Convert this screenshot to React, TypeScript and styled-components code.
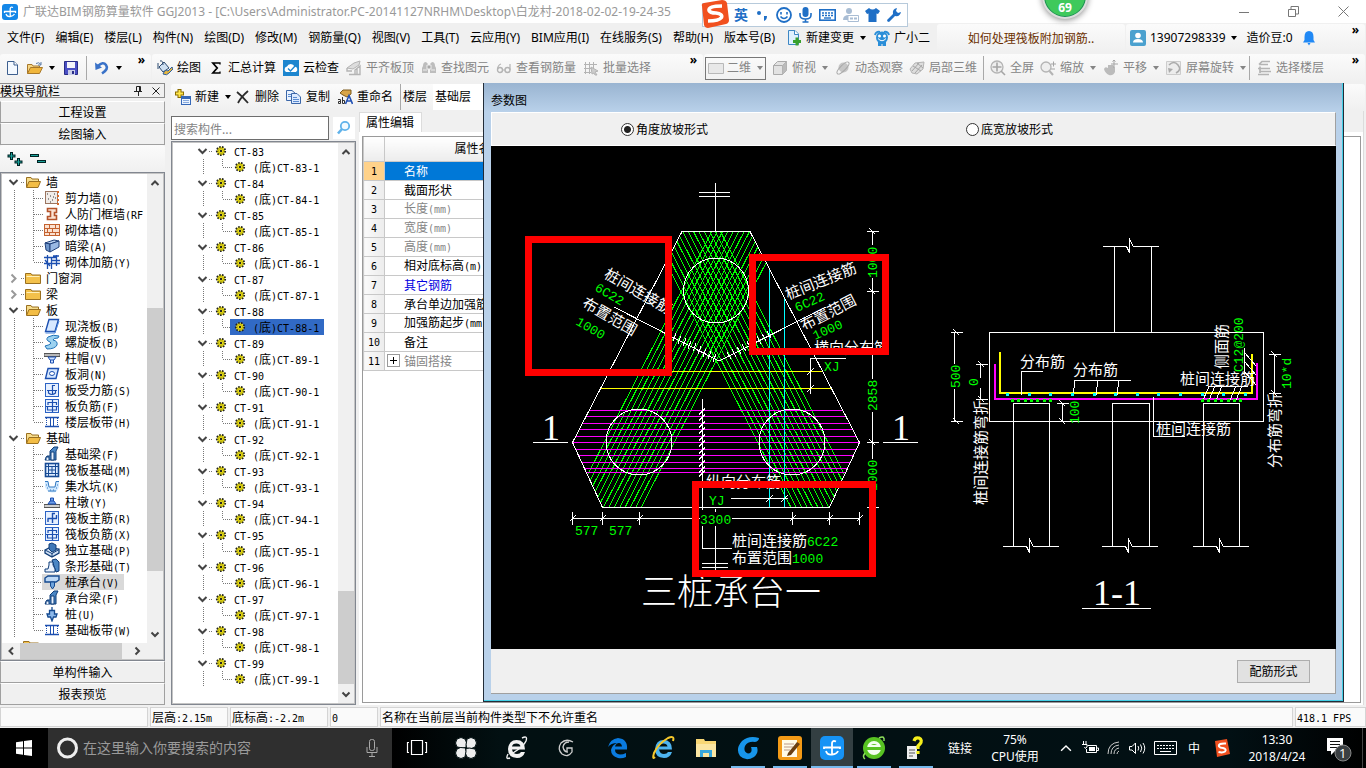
import React from 'react';
import styled, { createGlobalStyle, css } from 'styled-components';

const UI = '"Noto Sans", "Noto Sans CJK SC", sans-serif';
const SONG = '"Noto Sans CJK SC", sans-serif';
const MONO = '"DejaVu Sans Mono", "Noto Sans CJK SC", monospace';

const Global = createGlobalStyle`
  *, *::before, *::after { box-sizing: border-box; }
  body { margin: 0; background: #f0f0f0; font: 12px/16px ${UI}; color: #000; overflow: hidden; }
  button, input, select { font: inherit; color: inherit; margin: 0; }
  ul { list-style: none; margin: 0; padding: 0; }
  svg { display: block; flex: none; }
`;

/* ---------- text ---------- */

const Half = styled.span`
  font-family: ${MONO};
  font-size: 10px;
`;

const SongText = styled.span`
  font-family: ${SONG};
  font-size: 12px;
  white-space: nowrap;
`;

function Song({ children }: { children: string }) {
  return (
    <SongText>
      {children.split(/([\x20-\x7e]+)/).map((part, i) =>
        i % 2 ? <Half key={i}>{part}</Half> : part,
      )}
    </SongText>
  );
}

/* ---------- icons ---------- */

const blue = '#1c4fb0';
const g = '#b4b4b4';

const glyphs: Record<string, React.ReactNode> = {
  app: (<><rect width="16" height="16" rx="3" fill="#1487e8" /><path d="M2.500 9V7.500H13.500V9M8.200 12.500V4.500Q8.500 2.500 11 3.500M4 10Q5 13 8.200 12.500T12.500 10" fill="none" stroke="#fff" strokeWidth="1.300" /></>),
  doc: (<><path d="M3.500 1.500H10L13.500 5V14.500H3.500Z" fill="#f4f9ff" stroke="#3d5f8f" /><path d="M10 1.500V5H13.500" fill="#fff" stroke="#3d5f8f" /></>),
  open: (<><path d="M.5 13.500V4.500H5L6 6H12.500V8" fill="#f6d684" stroke="#a8782a" /><path d="M.5 13.500L3.500 7.500H15.500L12.500 13.500Z" fill="#f0b63c" stroke="#a8782a" /><path d="M9 3.500q3-2 5 1M14 2v3h-3" fill="none" stroke="#5d7da8" /></>),
  save: (<><path d="M1.500 1.500H14.500V14.500H1.500Z" fill="#4a4fc4" stroke="#2a2d86" /><rect x="4" y="2" width="8" height="6" fill="#f4f4fa" /><rect x="5" y="10" width="7" height="5" fill="#c9cde8" /><rect x="9" y="11" width="2" height="3" fill="#2a2d86" /></>),
  undo: (<><path d="M4 6Q9 1 12 5T8 13.500" fill="none" stroke="#3a72c8" strokeWidth="2.600" /><path d="M1 2.500L1.500 10L8 7.500Z" fill="#3a72c8" /></>),
  paint: (<><path d="M2 7L7 2L12 8L6 12Z" fill="#cfe0f2" stroke="#2d4a70" /><path d="M1 3V9M3 1Q6 0 6 5" fill="none" stroke="#2d4a70" /><path d="M6 14Q8 9 11 11L15 7L16 9L12 13Q10 16 6 14Z" fill="#e7b73e" stroke="#2d5fa0" /></>),
  sigma: <path d="M12 4.500V3H4.500L9 8L4.500 13H12V11.500M5 3L9.500 8L5 13" fill="none" stroke="#000" strokeWidth="1.300" />,
  cloudcheck: (<><rect y="0" width="16" height="16" fill="#1d86cf" /><path d="M3 12a3 3 0 0 1 1-5.500a4 4 0 0 1 7.500 0A3 3 0 0 1 13 12Z" fill="#fff" /><path d="M5 8.500L7.500 11L12.500 5.500" fill="none" stroke="#1d86cf" strokeWidth="1.400" /></>),
  align: (<><path d="M1 8L8 3L14 1L13 5L7 9Z" fill="#ddd" stroke={g} /><path d="M1 8V11H6M3 14.500H14V6L9 10V14M11 9V14" fill="none" stroke={g} strokeWidth="1.400" /></>),
  binoc: (<><path d="M2 6Q2 2 5 2L7 4V13H1V8ZM14 6Q14 2 11 2L9 4V13H15V8Z" fill="#bdbdbd" /><path d="M6 5H10V9H6ZM2 10H6M10 10H14" stroke="#eee" fill="#a8a8a8" /></>),
  glasses: (<><circle cx="4" cy="10" r="2.500" fill="none" stroke={g} strokeWidth="1.400" /><circle cx="11.500" cy="10" r="2.500" fill="none" stroke={g} strokeWidth="1.400" /><path d="M1.500 9Q2 5 5 4M14 10V4M6.500 10H9" fill="none" stroke={g} strokeWidth="1.200" /></>),
  batch: (<><path d="M2.500 2V14M6.500 2V14M10.500 2V9M1 4.500H14M1 8.500H10M1 12.500H8" stroke={g} fill="none" /><path d="M8 7L15 11L12 12L14 15L12 15L11 13L9 14Z" fill="#ccc" stroke={g} /></>),
  flat: <path d="M.5 3.500H15.500V13.500H.5Z" fill="#e8e8e8" stroke="#b8b8b8" />,
  cube: (<><path d="M1.500 5.500L5.500 1.500H14.500V10.500L10.500 14.500H1.500Z" fill="#e2e2e2" stroke="#aaa" /><path d="M1.500 5.500H10.500V14.500M10.500 5.500L14.500 1.500" fill="none" stroke="#aaa" /><path d="M10.500 5.500L14.500 1.500V10.500L10.500 14.500Z" fill="#bbb" /></>),
  orbit: (<><circle cx="8.500" cy="7.500" r="5" fill="#c6c6c6" /><ellipse cx="8" cy="8" rx="8" ry="2.600" transform="rotate(-45 8 8)" fill="none" stroke="#a8a8a8" /></>),
  local3d: (<><path d="M1 9L6 3L15 2L14 9L8 14L3 13Z" fill="#ddd" stroke={g} /><path d="M3 11L10 3M6 13L13 5M4 6L12 11M8 3L14 8" stroke="#a6a6a6" fill="none" /></>),
  fit: (<><circle cx="7" cy="7" r="6" fill="#eee" stroke={g} strokeWidth="1.300" /><path d="M7 2.500V11.500M2.500 7H11.500M11 11L15 15" stroke="#a5a5a5" strokeWidth="1.600" fill="none" /></>),
  zoom: (<><circle cx="6" cy="7" r="5" fill="#eee" stroke={g} strokeWidth="1.300" /><path d="M9.500 11L13 15" stroke={g} strokeWidth="2" /><path d="M11 4H16M13.500 1.500V6.500M11 9H15" stroke="#a5a5a5" /></>),
  pan: (<><path d="M1 9Q2 6 5 8V5H10L12 8V12Q10 16 6 15Q2 13 1 9Z" fill="#bbb" /><path d="M11 0V8M8 4H15M9.500 1.500L11 0L12.500 1.500" stroke="#a5a5a5" fill="none" /></>),
  rotate: (<><path d="M.5 1.500H14.500V14.500H.5Z" fill="#ececec" stroke="#ccc" /><path d="M3 5Q8 0 12 5T10 13" fill="none" stroke="#aaa" strokeWidth="1.600" /><path d="M2 8L7 9L3 13Z" fill="#aaa" /></>),
  floors: <path d="M3 4.500L6 1.500H14M3 4.500H12M2 8.500H14M4 6.500V13M4 11.500H15M2 14.500H13" fill="none" stroke={g} strokeWidth="1.700" />,
  create: (<><path d="M4.500 0V9M0 4.500H9" stroke="#8a6d00" strokeWidth="4" /><path d="M4.500 1V8M1 4.500H8" stroke="#ffe64a" strokeWidth="2" /><rect x="6.500" y="7.500" width="9" height="8" fill="#eaf3ff" stroke="#3568b8" /><path d="M7 9H15" stroke="#3568b8" strokeWidth="2" /><path d="M8 11.500H14M8 13.500H14" stroke="#88aadd" /></>),
  remove: <path d="M2 3Q7 7 13 14M13 2Q6 8 3 14" stroke="#2b2b2b" strokeWidth="1.800" fill="none" />,
  copy: (<><path d="M.5 1.500H6L9.500 4.500V11.500H.5Z" fill="#eaf3ff" stroke="#3b66a8" /><path d="M5.500 4.500H11L14.500 8V14.500H5.500Z" fill="#dceaff" stroke="#3b66a8" /><path d="M7 8.500H11M7 10.500H13M7 12.500H13M2 5.500H5M2 7.500H5" stroke="#5b8bd0" /></>),
  rename: (<><path d="M3 4L6 1L14 1V5L10 8L6 6Z" fill="#d8a548" stroke="#7c5a1c" /><path d="M1 10.500H3.500V14.500H1.500V12.500H3.500M5.500 8V14.500H7.500V11.500H5.500" fill="none" stroke="#333" /><path d="M8.500 15L12 6.500L15.500 15M10 12H14" fill="none" stroke="#2452b4" strokeWidth="1.600" /></>),
  lens: (<><circle cx="9" cy="6" r="4.200" fill="#f2faff" stroke="#5fb2ea" strokeWidth="1.800" /><path d="M6 9L2 13.500" stroke="#5fb2ea" strokeWidth="2.600" /></>),
  newdoc: (<><path d="M2.500.5H9L12.500 4V14.500H2.500Z" fill="#dff1ff" stroke="#3d87c4" /><path d="M8.500.5V4.500H12.500" fill="#fff" stroke="#3d87c4" /><path d="M11 7.500V15.500M7 11.500H15" stroke="#38a02c" strokeWidth="3" /></>),
  robot: (<><circle cx="8" cy="7.500" r="6" fill="#2a8ed8" /><path d="M1 5Q2 1 6 2M10 2Q14 1 15 5" stroke="#2a8ed8" strokeWidth="2" fill="none" /><circle cx="5.500" cy="6" r="1.500" fill="#fff" /><circle cx="10.500" cy="6" r="1.500" fill="#fff" /><path d="M4 8.500Q8 13 12 8.500" stroke="#fff" fill="none" /><path d="M4 12L4 16H7.500V14H8.500V16H12V12Z" fill="#2a8ed8" /></>),
  person: (<><rect width="16" height="16" rx="2" fill="#4ba1cf" /><circle cx="8" cy="5.500" r="2.800" fill="#fff" /><path d="M3 12.500Q3 9 8 9T13 12.500Z" fill="#fff" /></>),
  bell: <path d="M8 1Q12.500 1 12.500 7V10L14 12.500H2L3.500 10V7Q3.500 1 8 1ZM6.500 13H9.500L8 15.500Z" fill="#2189f5" />,
  expand: (<><path d="M4.500 1V9M.5 5H8.500M11.500 7V15M7.500 11H15.500" stroke="#022" strokeWidth="3" /><path d="M4.500 2V8M1.500 5H7.500M11.500 8V14M8.500 11H14.500" stroke="#1ba39c" strokeWidth="1" /></>),
  collapse: (<><path d="M0 4.500H9M7 10.500H16" stroke="#022" strokeWidth="3" /><path d="M1 4.500H8M8 10.500H15" stroke="#1ba39c" strokeWidth="1" /></>),
  folder: (<><path d="M.5 13.500V3.500H6L7 5H15.500V13.500Z" fill="#f3c14b" stroke="#9a7020" /><path d="M1.500 6.500H14.500" stroke="#fff0b8" /></>),
  folderopen: (<><path d="M1.500 13V3.500H6L7 5H13.500V8" fill="#f6dc8c" stroke="#9a7020" /><path d="M1.500 13.500L4 7.500H15.500L13 13.500Z" fill="#f3bd45" stroke="#9a7020" /></>),
  shearwall: (<><rect x="1.500" y="1.500" width="12" height="12" fill="#f1ece8" stroke="#9b7560" /><path d="M3 4H4M6 6H7M10 4H11M4 9H5M8 10H9M11 8H12M6 12H7M9 7H10" stroke="#333" /><path d="M14 1V15" stroke="#d86a2c" strokeWidth="2" strokeDasharray="2 2" /></>),
  frame: <path d="M3.500 2.500H12.500V6.500H10.500V9.500H12.500V13.500H3.500V10.500H6.500V5.500H3.500Z" fill="#fbe3d3" stroke="#b4532a" strokeWidth="1.600" />,
  brick: (<><rect x=".5" y="2.500" width="15" height="11" fill="#fbe1d0" stroke="#c4622f" /><path d="M0 6.500H16M0 10.500H16M5.500 2V6M11.500 2V6M3.500 6V10M8.500 6V10M5.500 10V14M11.500 10V14" stroke="#c4622f" /></>),
  beam: (<><path d="M1 5L10 2L15 3L6 6Z" fill="#b9d0ee" stroke="#20407a" /><path d="M1 5L6 6V14L2 12Z" fill="#6f97cc" stroke="#20407a" /><path d="M6 6L15 3V9L6 14Z" fill="#9ab9e4" stroke="#20407a" /></>),
  rebar: <path d="M0 3.500H12M8 6.500H16M0 9.500H16M3.500 1V15M7.500 3V15M12.500 1V12M1 6L6 12M9 2L15 2" stroke={blue} strokeWidth="1.300" fill="none" />,
  slab: (<><path d="M5 1.500H14.500L11 13.500H1.500Z" fill="#d6e8ff" stroke={blue} strokeWidth="1.400" /><path d="M1.500 15H11L15 3" fill="none" stroke="#4a86dc" /></>),
  spiral: <path d="M15 2Q9 0 4 3Q1 6 6 8Q9 10 1 12L3 15Q11 15 13 11Q14 7 9 6Q9 4 14 4Z" fill="#9cd2f0" stroke="#2072b8" />,
  cap: (<><path d="M0 3.500H16V6.500H0Z" fill="#b8b8b8" stroke="#555" /><path d="M4 7H12L10 10H6ZM6.500 10V13H9.500V10" fill="#cfe2ff" stroke={blue} /></>),
  hole: (<><path d="M4 2.500H14.500L12 12.500H1.500Z" fill="#d6e8ff" stroke={blue} strokeWidth="1.400" /><ellipse cx="8" cy="7.500" rx="2.500" ry="2" fill="#fff" stroke={blue} /></>),
  forcebar: (<><rect x="1.500" y="1.500" width="13" height="13" fill="#e6f0ff" stroke="#2c63c4" /><path d="M3 8.500H13M8.500 3V13M8.500 3.500H11M4.500 8V11Q8 14 11.500 11V8" stroke={blue} strokeWidth="1.200" fill="none" /></>),
  negbar: (<><rect x="1.500" y="1.500" width="13" height="13" fill="#e6f0ff" stroke="#2c63c4" /><path d="M8.500 2V14M4 4.500H13M4 4V7M12.500 4V7M2 8.500H14M3.500 12V9M12.500 12V9M3 12H13" stroke={blue} strokeWidth="1.200" fill="none" /></>),
  strip: (<><path d="M1 3.500H15M1 12.500H15" stroke={blue} strokeWidth="1.400" /><path d="M2.500 4V12M13.500 4V12" stroke={blue} strokeDasharray="1 1" /><path d="M6.500 4V12M9.500 4V12" stroke={blue} /></>),
  foundbeam: (<><path d="M1 14L3 10H6V5L10 1H14L12 5V14Z" fill="#4a86c4" stroke="#0f3c78" /><path d="M2 14V11H5V14M7 14V6H10V14Z" fill="#e8f2ff" stroke="#0f3c78" /></>),
  raft: (<><rect x="1.500" y="1.500" width="13" height="13" fill="#dcebff" stroke="#164a94" strokeWidth="1.600" /><path d="M4.500 2V14M8 4V12M11.500 2V14M2 4.500H14M4 8H12M2 11.500H14" stroke="#164a94" /></>),
  pit: (<><path d="M1 3.500H4L5 9H11L12 3.500H15V9Q13 15 8 14.500T1 9Z" fill="#cfe8ff" /><path d="M1 3.500H4L5 9H11L12 3.500H15" fill="none" stroke="#3278c0" /><path d="M2 7H3M3 10H4M6 12H7M9 12H10M12 10H13M13 7H14M4 13H12" stroke="#3278c0" /></>),
  pier: (<><path d="M0 10.500H16V13.500H0Z" fill="#d0d0d0" stroke="#555" /><path d="M4 10L6 7H10L12 10ZM6.500 7V4H9.500V7" fill="#6f9fe8" stroke={blue} /></>),
  mainbar: (<><rect x="1.500" y="1.500" width="13" height="13" fill="#e6f0ff" stroke="#2c63c4" /><path d="M8.500 3V13M3.500 8.500H13M8 3.500H11M4 8.500V12M12.500 5V8.500" stroke={blue} strokeWidth="1.400" fill="none" /></>),
  isolated: (<><path d="M1 8L5 6L15 7V11L8 15L1 11Z" fill="#cfe0f4" stroke="#123e78" strokeWidth="1.300" /><path d="M5 2L8 1L12 3V8L8 10L5 7Z" fill="#3f78b8" stroke="#123e78" /><path d="M1 8L8 11.500L15 7.500M8 11V15" stroke="#123e78" fill="none" /></>),
  stripfound: (<><path d="M8 2L12 1L15 4V13L12 14Z" fill="#4a86c4" stroke="#0f3c78" /><path d="M1 14V11H4L5 7V4H9V7L11 11V14Z" fill="#e8f2ff" stroke="#0f3c78" /></>),
  pilecap: (<><path d="M1 4L4 2H15V6L12 8H1Z" fill="#bcd8f6" stroke="#154a90" strokeWidth="1.400" /><path d="M6.500 8H10.500V12L8.500 15L6.500 12Z" fill="#6fa4dc" stroke="#154a90" /></>),
  pile: <path d="M8 1V4M5.500 4.500H10.500V8H13L12 11H9.500L8 15L6.500 11H4L3 8H5.500Z" fill="#8cb8ea" stroke="#154a90" strokeWidth="1.300" />,
  gear: (<><circle cx="8" cy="8" r="4.200" fill="#f4ea1c" stroke="#222" strokeWidth="1.800" strokeDasharray="1.600 1.300" /><circle cx="8" cy="8" r="2.600" fill="#f4ea1c" stroke="#998a00" strokeWidth=".6" /><circle cx="8" cy="8" r="1.200" fill="#222" /></>),
};

const Svg = styled.svg<{ $s: number }>`
  width: ${(p) => p.$s}px;
  height: ${(p) => p.$s}px;
`;
const Icon = ({ name, size = 16 }: { name: string; size?: number }) => (
  <Svg $s={size} viewBox="0 0 16 16" aria-hidden="true">{glyphs[name]}</Svg>
);
const Chev = ({ d, w = 10, color = '#444', sw = 2 }: { d: string; w?: number; color?: string; sw?: number }) => (
  <svg width={w} height={w} viewBox="0 0 10 10" aria-hidden="true"><path d={d} fill="none" stroke={color} strokeWidth={sw} /></svg>
);
const UP = 'M1.500 7L5 3.500L8.500 7';
const DOWN = 'M1.500 3.500L5 7L8.500 3.500';
const LEFT = 'M7 1.500L3.500 5L7 8.500';
const RIGHT = 'M3.500 1.500L7 5L3.500 8.500';

/* ---------- shell ---------- */

const Shell = styled.div`
  position: relative;
  display: flex;
  flex-direction: column;
  height: 100vh;
  overflow: hidden;
`;

const TitleBar = styled.header`
  display: flex;
  align-items: center;
  height: 23px;
  flex: none;
  padding-left: 2px;
  gap: 5px;
  background: #fff;
  color: #999;
`;
const Title = styled.h1`
  flex: 1;
  margin: 0;
  font-size: 12px;
  font-weight: 400;
  white-space: nowrap;
`;
const WinButton = styled.button`
  display: grid;
  place-items: center;
  width: 45px;
  height: 22px;
  padding: 0;
  border: 0;
  background: none;
`;

const ImeBar = styled.div`
  position: absolute;
  z-index: 5;
  top: 3px;
  left: 702px;
  display: flex;
  align-items: center;
  gap: 6px;
  width: 206px;
  height: 24px;
  padding: 0 2px 0 31px;
  border: 1px solid #b7cadb;
  background: #fff;
  color: #1f6fc6;
  font-size: 14px;
  font-weight: 700;
`;
const ImeLogo = styled.div`
  position: absolute;
  left: -3px;
  top: -4px;
`;
const Badge = styled.div`
  position: absolute;
  z-index: 5;
  top: -27px;
  left: 1042px;
  display: flex;
  align-items: flex-end;
  justify-content: center;
  width: 46px;
  height: 46px;
  padding-bottom: 2px;
  border: 2px solid #ddd;
  border-radius: 50%;
  background: #3fc95c;
  box-shadow: inset 0 0 0 1px #1f8a58, 0 1px 6px #888;
  color: #fff;
  font-weight: 700;
  line-height: 14px;
`;

const soft = css`
  background: linear-gradient(#fbfbfb, #f0f0f0);
  border-radius: 3px;
`;
const Row = styled.div<{ $h: number }>`
  display: flex;
  flex: none;
  height: ${(p) => p.$h}px;
`;
const Strip = styled.div<{ $w?: number; $pad: number; $gap: number; $plain?: boolean }>`
  display: flex;
  align-items: center;
  ${(p) => (p.$w ? `width: ${p.$w}px; flex: none;` : 'flex: 1; min-width: 0;')}
  padding-left: ${(p) => p.$pad}px;
  gap: ${(p) => p.$gap}px;
  margin: 1px 1px 1px 0;
  ${(p) => !p.$plain && soft}
`;
const More = styled.span`
  align-self: flex-start;
  margin: 0 6px 0 auto;
  font-weight: 700;
  line-height: 12px;
`;
const MenuButton = styled.button`
  padding: 0;
  border: 0;
  background: none;
  white-space: nowrap;
`;
const ToolButton = styled.button<{ $off?: boolean }>`
  display: flex;
  align-items: center;
  gap: 4px;
  padding: 0;
  border: 0;
  background: none;
  color: ${(p) => (p.$off ? '#858585' : '#000')};
  white-space: nowrap;
`;
const Arrow = styled.span<{ $tight?: boolean }>`
  width: 9px;
  margin-right: ${(p) => (p.$tight ? -4 : 0)}px;
  display: flex;
  justify-content: center;
  &::after {
    content: '';
    border: 3px solid transparent;
    border-top: 4px solid currentColor;
    border-bottom: 0;
  }
`;
const Sep = styled.span`
  width: 1px;
  height: 24px;
  background: #a8a8a8;
`;
const Notice = styled.a`
  flex: 1;
  text-align: center;
  color: #6b3000;
  text-decoration: none;
  font-family: ${SONG};
`;
const ViewSelect = styled.label`
  display: flex;
  align-items: center;
  gap: 3px;
  width: 61px;
  height: 23px;
  padding-left: 2px;
  border: 1px solid #777;
  color: #858585;
`;
const PlainSelect = styled.select`
  appearance: none;
  border: 0;
  padding: 0;
  background: none;
`;
const FloorLabel = styled.label`
  display: flex;
  align-items: center;
  gap: 6px;
  padding-left: 2px;
  border-left: 1px solid #a8a8a8;
  white-space: nowrap;
`;
const FloorSelect = styled(PlainSelect)`
  width: 70px;
  height: 26px;
  padding-left: 2px;
  background: #fff;
`;

const Work = styled.main`
  display: flex;
  flex: 1;
  min-height: 0;
`;
const Side = styled.aside`
  display: flex;
  flex-direction: column;
  width: 165px;
  margin-right: 6px;
  flex: none;
  padding-bottom: 2px;
`;
const SideHead = styled.div`
  display: flex;
  align-items: center;
  gap: 10px;
  height: 15px;
  margin-bottom: 3px;
  padding-right: 4px;
  border: 1px solid #8c8c8c;
  border-left: 0;
  h2 { flex: 1; margin: 0; font-size: 12px; line-height: 13px; font-weight: 400; }
`;
const SideButton = styled.button`
  height: 22px;
  flex: none;
  padding: 0;
  border: 1px solid #a0a0a0;
  border-top-color: #fff;
  background: #f0f0f0;
`;
const SideTools = styled.div`
  display: flex;
  align-items: center;
  gap: 7px;
  height: 27px;
  flex: none;
  padding-left: 7px;
  ${soft}
`;
const TreeBox = styled.div`
  display: flex;
  flex: 1;
  flex-direction: column;
  min-height: 0;
  border: 1px solid #828790;
  outline: 1px solid #c4c4c4;
  outline-offset: -2px;
  padding: 1px;
  background: #fff;
`;
const TreeBody = styled.div`
  display: flex;
  flex: 1;
  min-height: 0;
`;
const Tree = styled.ul`
  flex: 1;
  min-width: 0;
  overflow: hidden;
`;
const TreeRow = styled.li`
  display: flex;
  height: 16px;
  line-height: 16px;
`;
const TreeLabel = styled.span<{ $bg?: string }>`
  display: flex;
  gap: 5px;
  height: 16px;
  margin-left: -2px;
  padding: 0 5px 0 2px;
  background: ${(p) => p.$bg ?? 'none'};
`;

const VBar = styled.div`
  display: flex;
  flex-direction: column;
  align-items: center;
  width: 16px;
  flex: none;
  padding: 4px 0;
  background: #f0f0f0;
`;
const VTrack = styled.div<{ $before: number; $thumb: number; $after: number }>`
  display: grid;
  grid-template-rows: ${(p) => `${p.$before}fr ${p.$thumb}fr ${p.$after}fr`};
  flex: 1;
  width: 16px;
  margin: 4px 0;
  &::after { content: ''; grid-row: 2; background: #cdcdcd; }
`;
const HBar = styled.div`
  display: flex;
  align-items: center;
  height: 16px;
  flex: none;
  padding: 0 21px 0 4px;
  gap: 4px;
  background: #f0f0f0;
`;
const HTrack = styled.div`
  flex: 1;
  height: 16px;
  border-right: 6px solid #f0f0f0;
  background: #cdcdcd;
`;

const Right = styled.section`
  display: flex;
  flex-direction: column;
  flex: 1;
  min-width: 0;
`;
const Panels = styled.div`
  display: flex;
  flex: 1;
  min-height: 0;
  padding-bottom: 2px;
`;
const ListPanel = styled.section`
  display: flex;
  flex-direction: column;
  gap: 1px;
  width: 185px;
  margin-right: 3px;
  padding-top: 5px;
  flex: none;
`;
const SearchRow = styled.div`
  display: flex;
  align-items: center;
  gap: 4px;
  height: 24px;
  input {
    width: 158px;
    height: 24px;
    padding: 0 2px;
    border: 1px solid #6d6d6d;
    background: #fff;
    font-family: ${SONG};
    line-height: 20px;
  }
  input::placeholder { color: #858585; opacity: 1; }
  button {
    display: grid;
    place-items: center;
    width: 22px;
    height: 22px;
    padding: 0;
    border: 0;
    background: #fff;
  }
`;
const PropPanel = styled.section`
  display: flex;
  flex-direction: column;
  flex: 1;
  min-width: 0;
  margin-right: 2px;
  padding-top: 1px;
  border-right: 1px solid #dcdcdc;
`;
const Tab = styled.button`
  align-self: flex-start;
  width: 63px;
  height: 20px;
  padding: 0 0 2px 6px;
  border: 1px solid #dcdcdc;
  border-bottom: 0;
  background: #fff;
  text-align: left;
  font-family: ${SONG};
`;
const PropBody = styled.div`
  flex: 1;
  padding: 4px 2px 2px 3px;
  background: #fff;
`;
const Frame = styled.div`
  height: 100%;
  border: 1px solid #9a9a9a;
`;
const Table = styled.table`
  border-collapse: collapse;
  table-layout: fixed;
  width: 520px;
  th, td { height: 19px; padding: 0; border: 1px solid #c8c8c8; font-weight: 400; line-height: 16px; }
  thead th { height: 24px; background: linear-gradient(#fff, #ececec); border-top: 0; }
`;
const RowHead = styled.th<{ $on?: boolean }>`
  background: ${(p) => (p.$on ? '#ffd28a' : 'linear-gradient(90deg, #fafafa, #ececec)')};
`;
const NameCell = styled.td<{ $tone?: string; $on?: boolean }>`
  color: ${(p) => (p.$on ? '#fff' : p.$tone ?? '#000')};
  background: ${(p) => (p.$on ? '#0078d7' : '#fff')};
  white-space: nowrap;
`;
const NameFlex = styled.div`
  display: grid;
  grid-template-columns: 19px 1fr;
  align-items: center;
  overflow: hidden;
`;
const Plus = styled.button`
  display: grid;
  place-items: center;
  width: 13px;
  height: 13px;
  margin-left: 2px;
  padding: 0;
  border: 1px solid #999;
  background: #fff;
  color: #000;
`;

/* ---------- dialog ---------- */

const Dialog = styled.section`
  position: absolute;
  z-index: 3;
  top: 83px;
  bottom: 66px;
  left: 483px;
  right: 22px;
  display: flex;
  flex-direction: column;
  padding: 0 7px 7px;
  border: 1px solid #222c38;
  border-top: 0;
  box-shadow: inset -1px -1px #42cfe6;
  background: #b9d1ea linear-gradient(#99b4d1, #b9d1ea) no-repeat 0 0 / 100% 29px;
`;
const DialogTitle = styled.h2`
  margin: 0;
  height: 29px;
  padding-top: 6px;
  font: 400 12px/22px ${SONG};
`;
const Choices = styled.div`
  display: grid;
  grid-template-columns: 345px 1fr;
  align-items: center;
  height: 34px;
  padding-left: 129px;
  border: 1px solid #fff;
  border-right-color: #a0a0a0;
  background: #f0f0f0;
  label { display: flex; align-items: center; gap: 2px; font-family: ${SONG}; }
  input {
    appearance: none;
    width: 13px;
    height: 13px;
    border: 1px solid #333;
    border-radius: 50%;
    background: #fff;
  }
  input:checked { background: radial-gradient(#222 0 3px, #fff 4px); }
`;
const Canvas = styled.div`
  flex: 1;
  min-height: 0;
  background: #000;
  svg { width: 100%; height: 100%; }
`;
const DialogFoot = styled.div`
  display: flex;
  align-items: center;
  justify-content: flex-end;
  height: 45px;
  flex: none;
  padding-right: 25px;
  border: solid #a0a0a0;
  border-width: 0 1px 1px 0;
  background: #f0f0f0;
  button {
    width: 73px;
    height: 23px;
    padding: 0;
    border: 1px solid #adadad;
    background: #e1e1e1;
    font-family: ${SONG};
  }
`;

const Status = styled.footer`
  display: grid;
  grid-template-columns: 148px 78px 98px 48px 1fr 71px;
  gap: 2px;
  height: 20px;
  flex: none;
  margin-bottom: 1px;
  > span {
    padding-left: 1px;
    border: 1px solid #d4d4d4;
    background: #fafafa;
    line-height: 17px;
    overflow: hidden;
    white-space: nowrap;
  }
`;

/* ---------- taskbar ---------- */

const Taskbar = styled.nav`
  display: flex;
  height: 40px;
  flex: none;
  background: linear-gradient(90deg, #000 0 392px, #021012 500px, #021014 90%, #000);
  color: #fff;
`;
const TaskButton = styled.button<{ $w: number; $on?: boolean; $open?: boolean }>`
  display: grid;
  place-items: center;
  width: ${(p) => p.$w}px;
  flex: none;
  padding: 0;
  border: 0;
  background: ${(p) => (p.$on ? '#333f42' : 'none')};
  box-shadow: ${(p) => (p.$open || p.$on ? 'inset 0 -2px #76b9ed' : 'none')};
  ${(p) => p.$open && 'width: 34px; margin: 0 4px;'}
`;
const TaskSearch = styled.label`
  display: flex;
  align-items: center;
  gap: 3px;
  width: 344px;
  flex: none;
  padding: 0 12px 0 8px;
  background: #2f2f2f;
  input {
    flex: 1;
    min-width: 0;
    padding: 1px;
    border: 0;
    background: none;
    outline: 0;
    font-size: 14px;
  }
  input::placeholder { color: #9a9a9a; opacity: 1; }
`;
const Tray = styled.div`
  display: flex;
  margin-left: auto;
  padding-right: 2px;
  border-right: 1px solid #444;
  margin-right: 3px;
`;
const TrayItem = styled.div<{ $w: number }>`
  display: flex;
  align-items: center;
  justify-content: center;
  width: ${(p) => p.$w}px;
  line-height: 17px;
  text-align: center;
  white-space: pre;
`;

/* ---------- trees ---------- */

const Dots = ({ w, d, children }: { w: number; d: string; children?: React.ReactNode }) => (
  <svg width={w} height="16" aria-hidden="true">
    <path d={d} stroke="#777" strokeDasharray="1 1" fill="none" shapeRendering="crispEdges" />
    {children}
  </svg>
);

type Group = { name: string; open: boolean; items: [string, string][] };
const groups: Group[] = [
  { name: '墙', open: true, items: [['shearwall', '剪力墙(Q)'], ['frame', '人防门框墙(RF'], ['brick', '砌体墙(Q)'], ['beam', '暗梁(A)'], ['rebar', '砌体加筋(Y)']] },
  { name: '门窗洞', open: false, items: [] },
  { name: '梁', open: false, items: [] },
  { name: '板', open: true, items: [['slab', '现浇板(B)'], ['spiral', '螺旋板(B)'], ['cap', '柱帽(V)'], ['hole', '板洞(N)'], ['forcebar', '板受力筋(S)'], ['negbar', '板负筋(F)'], ['strip', '楼层板带(H)']] },
  { name: '基础', open: true, items: [['foundbeam', '基础梁(F)'], ['raft', '筏板基础(M)'], ['pit', '集水坑(K)'], ['pier', '柱墩(Y)'], ['mainbar', '筏板主筋(R)'], ['negbar', '筏板负筋(X)'], ['isolated', '独立基础(P)'], ['stripfound', '条形基础(T)'], ['pilecap', '桩承台(V)'], ['foundbeam', '承台梁(F)'], ['pile', '桩(U)'], ['strip', '基础板带(W)']] },
];

function ModuleTree() {
  return (
    <TreeBox>
      <TreeBody>
        <Tree>
          {groups.map((grp) => (
            <React.Fragment key={grp.name}>
              <TreeRow>
                <Dots w={23} d="M19 8.500H23">
                  <path d={grp.open ? 'M7.500 6L11.500 10L15.500 6' : 'M9.500 4.500L13.500 8.500L9.500 12.500'} fill="none" stroke={grp.open ? '#444' : '#999'} strokeWidth="2" />
                </Dots>
                <TreeLabel><Icon name={grp.open ? 'folderopen' : 'folder'} /><Song>{grp.name}</Song></TreeLabel>
              </TreeRow>
              {grp.items.map(([icon, label], i) => (
                <TreeRow key={label}>
                  <Dots w={42} d={`M12.500 0V16M31.500 0V${i === grp.items.length - 1 ? 8 : 16}M32 8.500H42`} />
                  <TreeLabel $bg={icon === 'pilecap' ? '#d9d9d9' : undefined}><Icon name={icon} /><Song>{label}</Song></TreeLabel>
                </TreeRow>
              ))}
            </React.Fragment>
          ))}
          <TreeRow><Dots w={21} d="M19 8.500H21" /><Icon name="folder" /></TreeRow>
        </Tree>
        <VBar><Chev d={UP} /><VTrack $before={116} $thumb={262} $after={54} /><Chev d={DOWN} /></VBar>
      </TreeBody>
      <HBar><Chev d={LEFT} /><HTrack /><Chev d={RIGHT} /></HBar>
    </TreeBox>
  );
}

const members = Array.from({ length: 17 }, (_, i) => `CT-${83 + i}`);

function MemberTree() {
  return (
    <TreeBox>
      <TreeBody>
        <Tree>
          {members.map((m) => (
            <React.Fragment key={m}>
              <TreeRow>
                <Dots w={40} d="M36 8.500H40"><path d="M25.500 6L29.500 10L33.500 6" fill="none" stroke="#444" strokeWidth="2" /></Dots>
                <TreeLabel><Icon name="gear" /><Song>{m}</Song></TreeLabel>
              </TreeRow>
              <TreeRow>
                <Dots w={59} d="M30.500 0V16M49.500 0V8M50 8.500H59" />
                <TreeLabel $bg={m === 'CT-88' ? '#316ac5' : undefined}><Icon name="gear" /><Song>{`(底)${m}-1`}</Song></TreeLabel>
              </TreeRow>
            </React.Fragment>
          ))}
        </Tree>
        <VBar><Chev d={UP} /><VTrack $before={430} $thumb={93} $after={1} /><Chev d={DOWN} /></VBar>
      </TreeBody>
    </TreeBox>
  );
}

/* ---------- reinforcement drawing ---------- */

const G = '#00ff00';
const W = '#ffffff';

function Label({ x, y, r = 0, c = W, children, big }: { x: number; y: number; r?: number; c?: string; children: string; big?: boolean }) {
  const latin = /^[\x20-\x7e]+$/.test(children);
  return (
    <text
      transform={`translate(${x} ${y}) rotate(${r})`}
      fill={c}
      fontSize={big ? 36 : latin ? 13 : 15}
      fontWeight={big ? 300 : 400}
      fontFamily={big ? '"Liberation Serif", "Noto Sans CJK SC", serif' : latin ? '"Liberation Mono", monospace' : SONG}
    >
      {children}
    </text>
  );
}

const OUTLINE = 'M682 231.500H750L859.500 442.500L829.500 507.500H602.500L572.500 442.500Z';
const bars = Array.from({ length: 14 }, (_, i) => -35 + i * 5.4);
const rows = [410.5, 416.5, 423.5, 429.5, 436.5, 442.5, 449.5, 455.5, 462.5, 468.5, 472.5];
const brk = (x: number, y: number) => `M${x - 28} ${y}H${x - 4}L${x - 1} ${y + 6}V${y - 7}L${x + 3} ${y}H${x + 28}`;
const tickV = (xs: number[], y: number) => xs.map((x) => `M${x} ${y - 7}V${y + 6}M${x - 3} ${y + 3}L${x + 3} ${y - 3}`).join('');
const tickH = (x: number, ys: number[]) => ys.map((y) => `M${x - 6} ${y}H${x + 6}M${x - 3} ${y - 3}L${x + 3} ${y + 3}`).join('');

function Drawing() {
  return (
    <svg viewBox="491 146 845 503" role="img" aria-label="三桩承台一">
      <clipPath id="cap"><path d={OUTLINE} /></clipPath>
      <g fill="none" stroke={W} shapeRendering="crispEdges">
        <g clipPath="url(#cap)">
          <path stroke={G} d={bars.map((b) => `M${606 + b} 507.500L${748 + b} 229M${826 + b} 507.500L${684 + b} 229`).join('')} />
          <path stroke="#f0f" d={rows.map((y) => `M560 ${y}H870`).join('')} />
        </g>
        <path stroke="#ff0" d="M609.500 371.500H823M600.500 388.500H832" />
        <path stroke="#0ff" d="M769.500 269V507M784.500 298V507" />
        <path d={OUTLINE} />
        <circle cx="716" cy="290.500" r="32.500" />
        <circle cx="639" cy="442" r="33" />
        <circle cx="792" cy="442" r="33" />
        <path d="M715.500 183V231M699 192.500H730M699 196.500H730" />
        <path d="M614 307L719 361L826 307" />
        <path d={[0, 1, 2, 3, 4, 5, 6, 7, 8].map((i) => `M${673 + i * 5} ${341 + i * 2.6}L${676 + i * 5} ${333 + i * 2.6}M${727 + i * 5} ${352 - i * 2.6}L${731 + i * 5} ${359 - i * 2.6}`).join('')} />
        <path d={`M702.500 399V510M702.500 526V548.500H732M715.500 509V512M715.500 526V570M702 563.500H728M702 567.500H728${rows.map((y) => `M699 ${y + 4}L705 ${y - 2}`).join('')}`} />
        <path d={`M846 358.500H810.500V394M807 375L814 368M807 392L814 385M731 498.500H788M766 502L773 495M781 502L788 495`} />
        <path d={`M572 518.500H700M732 518.500H859${tickV([572.5, 602.5, 639.5, 792.5, 829.5, 859.5], 518.5)}`} />
        <path d={`M872.500 231V245M872.500 278V379M872.500 412V459M872.500 492V507${tickH(872.5, [231.5, 291.5, 442.5, 507.5])}`} />
        <path d="M533 442.500H568M883 442.500H918M1082 608.500H1151" />
        <path d={brk(1130.5, 246.5) + brk(1030.5, 546.5) + brk(1129.5, 546.5) + brk(1220.5, 546.5)} />
        <path d="M1114.500 246V332M1151.500 246V332M989.500 332.500H1263.500V421.500H989.500ZM1013.500 546V403.500H1049.500V546M1112.500 546V403.500H1149.500V546M1203.500 546V403.500H1239.500V546" />
        <path stroke="#f0f" strokeWidth="2" d="M995 364V399H1257V363" />
        <path stroke="#ff0" strokeWidth="2" d="M1000 352V393H1252V354" />
        <path d="M1043 371.500H1021.500V395M1131 380.500H1075L1073 395M1098 380L1096 395M1119 380L1117 395M1248 386.500H1209L1203 400M1215 386L1209 400M1222 386L1216 400M1236 386L1230 400M1242 386L1236 400M1153.500 397V436.500H1185" />
        <path d="M1244.500 348V374M1245 353L1256 366M1245 362L1256 375M1245 372L1256 385" />
        <path d={`M954.500 332V364M954.500 389V421M980.500 364V378M980.500 388V399M1062.500 403V421M1274.500 354V393${tickH(956.5, [332.5, 421.5])}${tickH(981.5, [364.5, 399.5])}${tickH(1062.5, [403.5, 421.5])}${tickH(1274.5, [354.5, 393.5])}`} />
      </g>
      <path stroke="#0ff" strokeWidth="3" d={[1007, 1029, 1050, 1072, 1094, 1115, 1137, 1158, 1180, 1202, 1223, 1245].map((x) => `M${x - 1} 394.500h3`).join('')} />
      <path stroke={G} strokeWidth="3" d={[1012, 1018, 1025, 1031, 1037, 1044, 1050, 1202, 1208, 1215, 1221, 1228, 1234, 1240].map((x) => `M${x - 1} 400.500h3`).join('')} />

      <Label x={603} y={277} r={30}>桩间连接筋</Label>
      <Label x={594} y={290} r={30} c={G}>6C22</Label>
      <Label x={581} y={306} r={30}>布置范围</Label>
      <Label x={575} y={324} r={30} c={G}>1000</Label>
      <Label x={788} y={300} r={-22}>桩间连接筋</Label>
      <Label x={797} y={312} r={-24} c={G}>6C22</Label>
      <Label x={804} y={331} r={-27}>布置范围</Label>
      <Label x={815} y={340} r={-24} c={G}>1000</Label>
      <Label x={814} y={353}>横向分布筋</Label>
      <Label x={824} y={371} c={G}>XJ</Label>
      <Label x={706} y={487}>纵向分布筋</Label>
      <Label x={709} y={505} c={G}>YJ</Label>
      <Label x={575} y={535} c={G}>577</Label>
      <Label x={609} y={535} c={G}>577</Label>
      <Label x={700} y={524} c={G}>3300</Label>
      <Label x={732} y={546}>桩间连接筋</Label>
      <Label x={807} y={546} c={G}>6C22</Label>
      <Label x={732} y={563}>布置范围</Label>
      <Label x={792} y={563} c={G}>1000</Label>
      <Label x={877} y={278} r={-90} c={G}>1000</Label>
      <Label x={877} y={411} r={-90} c={G}>2858</Label>
      <Label x={877} y={491} r={-90} c={G}>1000</Label>
      <Label x={542} y={440} big>1</Label>
      <Label x={892} y={440} big>1</Label>
      <Label x={641} y={605} big>三桩承台一</Label>
      <Label x={1093} y={605} big>1-1</Label>
      <Label x={1020} y={367}>分布筋</Label>
      <Label x={1073} y={375}>分布筋</Label>
      <Label x={1180} y={384}>桩间连接筋</Label>
      <Label x={1156} y={434}>桩间连接筋</Label>
      <Label x={1227} y={369} r={-90}>侧面筋</Label>
      <Label x={1243} y={372} r={-90} c={G}>C12@200</Label>
      <Label x={960} y={388} r={-90} c={G}>500</Label>
      <Label x={978} y={386} r={-90} c={G}>0</Label>
      <Label x={986} y={505} r={-90}>桩间连接筋弯折</Label>
      <Label x={1079} y={424} r={-90} c={G}>100</Label>
      <Label x={1291} y={389} r={-90} c={G}>10*d</Label>
      <Label x={1280} y={468} r={-90}>分布筋弯折</Label>

      <g fill="none" stroke="#f00" strokeWidth="7">
        <rect x="528.500" y="239.500" width="140" height="133" />
        <rect x="752.500" y="257.500" width="133" height="94" />
        <rect x="695.500" y="484.500" width="177" height="89" />
      </g>
    </svg>
  );
}

/* ---------- bars ---------- */

type Tool = { icon: string; text?: string; arrow?: boolean; tight?: boolean };
const Tools = ({ list, off }: { list: Tool[]; off?: boolean }) => (
  <>
    {list.map((t, i) => (
      <ToolButton key={i} $off={off} aria-label={t.text ?? t.icon}>
        <Icon name={t.icon} />{t.text}{t.arrow && <Arrow $tight={t.tight} />}
      </ToolButton>
    ))}
  </>
);

const menus = ['文件(F)', '编辑(E)', '楼层(L)', '构件(N)', '绘图(D)', '修改(M)', '钢筋量(Q)', '视图(V)', '工具(T)', '云应用(Y)', 'BIM应用(I)', '在线服务(S)', '帮助(H)', '版本号(B)'];

const props: [string, string?][] = [
  ['名称'], ['截面形状'], ['长度(mm)', '#858585'], ['宽度(mm)', '#858585'], ['高度(mm)', '#858585'], ['相对底标高(m)'],
  ['其它钢筋', '#0000e0'], ['承台单边加强筋'], ['加强筋起步(mm)'], ['备注'], ['锚固搭接', '#858585'],
];

const Ime = () => (
  <ImeBar>
    <ImeLogo>
      <svg width="30" height="28" viewBox="0 0 30 28"><path d="M2 6Q1 4 4 3L22 0Q26 0 27 3L29 20Q29 23 26 24L8 28Q5 28 4 25Z" fill="#f1501f" /><path d="M22 6Q8 6 9 10.500Q10 13 16 13Q23 14 21.500 17.500Q19 21 8 21" fill="none" stroke="#fff" strokeWidth="3.500" /></svg>
    </ImeLogo>
    <span>英</span>
    <svg width="16" height="18" viewBox="0 0 16 18"><circle cx="5" cy="7" r="2" fill="#1f6fc6" /><path d="M10 10h3q0 4-3 5" fill="#1f6fc6" /></svg>
    <svg width="16" height="16" viewBox="0 0 16 16"><circle cx="8" cy="8" r="7" fill="none" stroke="#1f6fc6" strokeWidth="1.800" /><path d="M5 5V7.500M11 5V7.500M4.500 9.500Q8 13.500 11.500 9.500" stroke="#1f6fc6" strokeWidth="1.600" fill="none" /></svg>
    <svg width="15" height="16" viewBox="0 0 15 16"><rect x="4.500" y="0" width="6" height="10" rx="3" fill="#1f6fc6" /><path d="M2 6V8Q2 12 7.500 12T13 8V6M7.500 12V15M4.500 15H10.500" fill="none" stroke="#1f6fc6" strokeWidth="1.600" /></svg>
    <svg width="17" height="14" viewBox="0 0 17 14"><rect x=".8" y="1.800" width="15.400" height="10.400" fill="none" stroke="#1f6fc6" strokeWidth="1.600" /><path d="M3 5H14M3 7.500H14" stroke="#1f6fc6" strokeWidth="1.500" strokeDasharray="2 1" /><path d="M5 10H12" stroke="#1f6fc6" strokeWidth="1.400" /></svg>
    <svg width="17" height="16" viewBox="0 0 17 16"><circle cx="7" cy="4" r="3" fill="#a9bdd4" /><path d="M1 13Q1 8 7 8V13Z" fill="#a9bdd4" /><path d="M6 8.500H16.500V14.500H6Z" fill="#fff" stroke="#a9bdd4" /><path d="M8 11.500H15" stroke="#a9bdd4" strokeWidth="2" strokeDasharray="3 1" /></svg>
    <svg width="15" height="14" viewBox="0 0 15 14"><path d="M0 3L4 0Q7.500 3 11 0L15 3L13 6L11.500 5.500V14H3.500V5.500L2 6Z" fill="#1f6fc6" /></svg>
    <svg width="15" height="15" viewBox="0 0 15 15"><path d="M1 12L7 6Q6 1 11 0L10 3L12 5L15 4Q14 9 9 8L3 14Q1 14 1 12Z" fill="#1f6fc6" /></svg>
  </ImeBar>
);

const E = ({ c }: { c: string }) => (
  <path fillRule="evenodd" d="M21 14.500H8Q9 19 13 19Q16 19 17 17H21Q19 23 13 23Q4 22.500 4 14Q5 5 12.500 5Q21 5 21 14.500ZM8 11.500H16.500Q16 8.500 12.300 8.500Q8.500 8.500 8 11.500Z" fill={c} />
);
const swirl = [0, 90, 180, 270];

const tasks: { w: number; open?: boolean; on?: boolean; label: string; art: React.ReactNode }[] = [
  { w: 49, label: 'task view', art: <path d="M7.500 5.500H18.500V19.500H7.500ZM5 7.500H3.500V17.500H5M21 7.500H22.500V17.500H21" fill="none" stroke="#fff" strokeWidth="1.200" /> },
  { w: 50, label: 'pinwheel', art: <>{swirl.map((a) => <path key={a} transform={`rotate(${a} 13 13)`} d="M13 12.500Q10 13.500 4 12Q1 8 4 4Q8 1 12 4Q14.500 7 13 12.500Z" fill="#eee" stroke="#021012" />)}</> },
  { w: 51, label: 'browser', art: <><E c="#f2f2f2" /><path d="M6 23Q1 25 4 19M18 3Q24 0 22 6Q20 11 9 18" fill="none" stroke="#f2f2f2" strokeWidth="1.400" /></> },
  { w: 50, label: 'G', art: <path d="M19 7Q12 3 7 8Q3 14 8 19Q14 23 18 17V13H13V16M15 7Q10 7 9 12Q10 17 14 17" fill="none" stroke="#cfcfcf" strokeWidth="1.300" /> },
  { w: 51, label: 'Edge', art: <path fillRule="evenodd" d="M3 12Q5 4 13 3Q23 4 22 14.500H10Q10 19 15 19.500Q18 19.500 21 18V22Q17 24 13 23Q6 21 6 15Q7 10 12 8Q6 8 3 12ZM10 11.500H17Q16.500 8 14 8Q11 8 10 11.500Z" fill="#0a7be0" /> },
  { w: 42, label: 'Internet Explorer', art: <><E c="#4db4f0" /><path d="M4 22Q1 25 3 18Q7 9 17 3Q24 0 22 6" fill="none" stroke="#f7c92c" strokeWidth="2" /></> },
  { w: 42, label: 'Explorer', art: <><path d="M3 4H11L12 6H23V22H3Z" fill="#f8d775" /><path d="M3 9H23V22H3Z" fill="#fbe6a2" /><path d="M7 22V15H19V22H16V18H10V22Z" fill="#37a7dd" /></> },
  { w: 42, open: true, label: 'G5', art: <path d="M24 3Q14 0 7 6Q0 14 5 21Q11 27 19 22Q24 18 22 12H16Q18 18 13 18.500Q8 17 10 11Q13 6 20 7Q24 6 24 3Z" fill="#1795ea" /> },
  { w: 42, open: true, label: 'notes', art: <><rect x="1" y="1" width="24" height="24" rx="3" fill="#f39a16" /><path d="M5 5H20V22H5Z" fill="#fffbe8" /><path d="M7 9H17M7 12H16M7 15H13" stroke="#b98" /><path d="M11 18L20 7L23 9L14 20L10 21Z" fill="#6b3f12" /></> },
  { w: 42, on: true, label: '广联达', art: <><rect x="1" y="1" width="24" height="24" rx="5" fill="#1693f5" /><path d="M5 14V12.500H21V14M13 19.500V8Q13.500 5 17 6.500M7 16Q8 20 13 19.500T19 16" fill="none" stroke="#fff" strokeWidth="1.800" /></> },
  { w: 42, open: true, label: '360', art: <><circle cx="13" cy="13" r="11" fill="#58c322" /><circle cx="13" cy="13" r="7" fill="#f3fff0" /><path d="M6 13.500H20" stroke="#58c322" strokeWidth="3" /><path d="M10 10Q13 8 16 10Z" fill="#58c322" /><path d="M4 24Q1 22 4 18M18 3Q24 0 23 6" stroke="#8ee05c" strokeWidth="1.500" fill="none" /></> },
  { w: 42, open: true, label: 'help', art: <><path d="M4 11H14V24H4Z" fill="#eee" /><path d="M6 15H12M6 18H12M6 21H10" stroke="#555" /><path d="M11 6Q12 2 16 3Q20 5 17 9L15 11V14M15 16V19" fill="none" stroke="#f5ee1a" strokeWidth="3.200" /></> },
];

export default function App() {
  return (
    <Shell>
      <Global />
      <TitleBar>
        <Icon name="app" />
        <Title>广联达BIM钢筋算量软件 GGJ2013 - [C:\Users\Administrator.PC-20141127NRHM\Desktop\白龙村-2018-02-02-19-24-35</Title>
        <WinButton aria-label="minimize"><svg width="10" height="10"><path d="M0 5.500H10" stroke="#777" /></svg></WinButton>
        <WinButton aria-label="restore"><svg width="11" height="11"><path d="M.5 3.500H7.500V10.500H.5ZM3 3V.5H10.500V8H8" fill="none" stroke="#777" /></svg></WinButton>
        <WinButton aria-label="close"><svg width="11" height="11"><path d="M.5.5L10.500 10.500M10.500.5L.5 10.500" stroke="#777" /></svg></WinButton>
      </TitleBar>
      <Ime />
      <Badge>69</Badge>

      <Row $h={30}>
        <Strip $w={936} $pad={7} $gap={11} $plain>
          {menus.map((m) => <MenuButton key={m}>{m}</MenuButton>)}
          <Tools list={[{ icon: 'newdoc', text: '新建变更', arrow: true, tight: true }, { icon: 'robot', text: '广小二' }]} />
        </Strip>
        <Strip $w={188} $pad={0} $gap={0}><Notice href="#">如何处理筏板附加钢筋..</Notice></Strip>
        <Strip $pad={4} $gap={8}>
          <Tools list={[{ icon: 'person', text: '13907298339', arrow: true }]} />
          <span>造价豆:0</span>
          <Icon name="bell" />
          <More>»</More>
        </Strip>
      </Row>

      <Row $h={30}>
        <Strip $w={151} $pad={4} $gap={7}>
          <Tools list={[{ icon: 'doc' }, { icon: 'open', arrow: true }, { icon: 'save' }]} />
          <Sep />
          <Tools list={[{ icon: 'undo', arrow: true }]} />
          <More>»</More>
        </Strip>
        <Strip $w={551} $pad={5} $gap={7}>
          <Tools list={[{ icon: 'paint', text: '绘图' }, { icon: 'sigma', text: '汇总计算' }, { icon: 'cloudcheck', text: '云检查' }]} />
          <Tools off list={[{ icon: 'align', text: '平齐板顶' }, { icon: 'binoc', text: '查找图元' }, { icon: 'glasses', text: '查看钢筋量' }, { icon: 'batch', text: '批量选择' }]} />
          <More>»</More>
        </Strip>
        <Strip $pad={1} $gap={6}>
          <ViewSelect>
            <Icon name="flat" />
            <PlainSelect aria-label="视图"><option>二维</option></PlainSelect>
            <Arrow />
          </ViewSelect>
          <Tools off list={[{ icon: 'cube', text: '俯视', arrow: true }, { icon: 'orbit', text: '动态观察' }, { icon: 'local3d', text: '局部三维' }]} />
          <Sep />
          <Tools off list={[{ icon: 'fit', text: '全屏' }, { icon: 'zoom', text: '缩放', arrow: true }, { icon: 'pan', text: '平移', arrow: true }, { icon: 'rotate', text: '屏幕旋转', arrow: true, tight: true }]} />
          <Sep />
          <Tools off list={[{ icon: 'floors', text: '选择楼层' }]} />
          <More>»</More>
        </Strip>
      </Row>

      <Work>
        <Side>
          <SideHead>
            <h2><Song>模块导航栏</Song></h2>
            <svg width="8" height="10" viewBox="0 0 8 10"><path d="M2.500.5H6.500V5.500H2.500ZM5.500 0V5M0 5.500H8M4.500 6V10" fill="none" stroke="#222" /></svg>
            <svg width="8" height="8" viewBox="0 0 8 8"><path d="M.5.5L7.500 7.500M7.500.5L.5 7.500" stroke="#222" /></svg>
          </SideHead>
          <SideButton><Song>工程设置</Song></SideButton>
          <SideButton><Song>绘图输入</Song></SideButton>
          <SideTools><Icon name="expand" /><Icon name="collapse" /></SideTools>
          <ModuleTree />
          <SideButton><Song>单构件输入</Song></SideButton>
          <SideButton><Song>报表预览</Song></SideButton>
        </Side>
        <Right>
          <Row $h={28}>
            <Strip $pad={4} $gap={7}>
              <Tools list={[{ icon: 'create', text: '新建', arrow: true, tight: true }, { icon: 'remove', text: '删除' }, { icon: 'copy', text: '复制' }, { icon: 'rename', text: '重命名' }]} />
              <FloorLabel>楼层<FloorSelect><option>基础层</option></FloorSelect></FloorLabel>
            </Strip>
          </Row>
          <Panels>
            <ListPanel>
              <SearchRow>
                <input aria-label="搜索构件" placeholder="搜索构件..." />
                <button aria-label="search"><Icon name="lens" /></button>
              </SearchRow>
              <MemberTree />
            </ListPanel>
            <PropPanel>
              <Tab>属性编辑</Tab>
              <PropBody>
                <Frame>
                  <Table>
                    <colgroup><col width="21" /><col width="188" /><col /></colgroup>
                    <thead><tr><th /><th><Song>属性名称</Song></th><th /></tr></thead>
                    <tbody>
                      {props.map(([name, tone], i) => (
                        <tr key={name}>
                          <RowHead $on={i === 0}><Song>{String(i + 1)}</Song></RowHead>
                          <NameCell $tone={tone} $on={i === 0}>
                            <NameFlex>{i === 10 ? <Plus aria-label="expand"><svg width="9" height="9"><path d="M4.500 1V8M1 4.500H8" stroke="#000" /></svg></Plus> : <span />}<Song>{name}</Song></NameFlex>
                          </NameCell>
                          <td />
                        </tr>
                      ))}
                    </tbody>
                  </Table>
                </Frame>
              </PropBody>
            </PropPanel>
          </Panels>
        </Right>
      </Work>

      <Dialog role="dialog" aria-label="参数图">
        <DialogTitle>参数图</DialogTitle>
        <Choices>
          <label><input type="radio" name="slope" defaultChecked />角度放坡形式</label>
          <label><input type="radio" name="slope" />底宽放坡形式</label>
        </Choices>
        <Canvas><Drawing /></Canvas>
        <DialogFoot><button>配筋形式</button></DialogFoot>
      </Dialog>

      <Status>
        <span />
        <span><Song>层高:2.15m</Song></span>
        <span><Song>底标高:-2.2m</Song></span>
        <span><Song>0</Song></span>
        <span><Song>名称在当前层当前构件类型下不允许重名</Song></span>
        <span><Song>418.1 FPS</Song></span>
      </Status>

      <Taskbar>
        <TaskButton $w={48} aria-label="start">
          <svg width="16" height="16" viewBox="0 0 16 16"><path d="M0 2.200L7 1.200V7.500H0ZM8 1L16 0V7.500H8ZM0 8.500H7V14.800L0 13.800ZM8 8.500H16V16L8 15Z" fill="#fff" /></svg>
        </TaskButton>
        <TaskSearch>
          <svg width="23" height="28" viewBox="0 0 23 28"><circle cx="11.500" cy="14" r="9" fill="none" stroke="#eee" strokeWidth="3" /></svg>
          <input aria-label="搜索" placeholder="在这里输入你要搜索的内容" />
          <svg width="16" height="20" viewBox="0 0 16 20"><rect x="5.500" y="1.500" width="5" height="11" rx="2" fill="none" stroke="#aaa" /><path d="M3 9V14.500H13V9M8 15V18M5 18.500H11" fill="none" stroke="#aaa" /></svg>
        </TaskSearch>
        {tasks.map((t) => (
          <TaskButton key={t.label} $w={t.w} $open={t.open} $on={t.on} aria-label={t.label}>
            <svg width="26" height="26" viewBox="0 0 26 26">{t.art}</svg>
          </TaskButton>
        ))}
        <Tray>
          <TrayItem $w={30}>链接</TrayItem>
          <TrayItem $w={80}>{'75%\nCPU使用'}</TrayItem>
          <TrayItem $w={22}><Chev d={UP} w={14} color="#fff" sw={1} /></TrayItem>
          <TrayItem $w={26}><svg width="18" height="14" viewBox="0 0 18 14"><path d="M6.500 4.500H15.500V11.500H5.500V8M16 7H17.500V9.500H16M1 3.500H6V6Q4 9 3.500 6M2.500 0V3M5 0V3" fill="none" stroke="#fff" /><path d="M8 6H14V10H8Z" fill="#fff" /></svg></TrayItem>
          <TrayItem $w={22}><svg width="14" height="14" viewBox="0 0 14 14"><path d="M1 13Q1 2 12 1M4 13Q4 5 12 4M7 13Q7 8 12 7M10 13Q10 11 12 10" fill="none" stroke="#ccc" /></svg></TrayItem>
          <TrayItem $w={24}><svg width="17" height="14" viewBox="0 0 17 14"><path d="M.5 5.500H3L6.500 2V12.500L3 9H.5ZM9 5Q10.500 7 9 9.500M11.500 3.500Q14 7 11.500 11M14 2Q17.500 7 14 12.500" fill="none" stroke="#fff" /></svg></TrayItem>
          <TrayItem $w={32}><svg width="23" height="14" viewBox="0 0 23 14"><path d="M.5.5H22.500V13.500H.5Z" fill="none" stroke="#fff" /><path d="M3 4.500H20M3 7.500H20" stroke="#fff" strokeDasharray="2 1" /><path d="M6 10.500H17" stroke="#fff" /></svg></TrayItem>
          <TrayItem $w={26}>中</TrayItem>
          <TrayItem $w={30}><svg width="16" height="18" viewBox="0 0 16 18"><path d="M1 2L13 0L16 15L3 18Z" fill="#f1501f" /><path d="M12 4.500Q4 4 5 7.500Q6 9 9 9Q13 10 11 12.500Q9 14 4.500 13" fill="none" stroke="#fff" strokeWidth="2" /></svg></TrayItem>
          <TrayItem $w={80}>{'13:30\n2018/4/24'}</TrayItem>
          <TrayItem $w={43}><svg width="28" height="30" viewBox="0 0 28 30"><path d="M2 5H18V18H10L6 22V18H2Z" fill="#fff" /><path d="M5 8.500H15M5 11.500H15M5 14.500H12" stroke="#111" /><circle cx="18" cy="20" r="8" fill="#3a3f42" stroke="#888" /><text x="14" y="25" fontSize="13" fill="#fff" fontFamily="Open Sans">1</text></svg></TrayItem>
        </Tray>
      </Taskbar>
    </Shell>
  );
}
